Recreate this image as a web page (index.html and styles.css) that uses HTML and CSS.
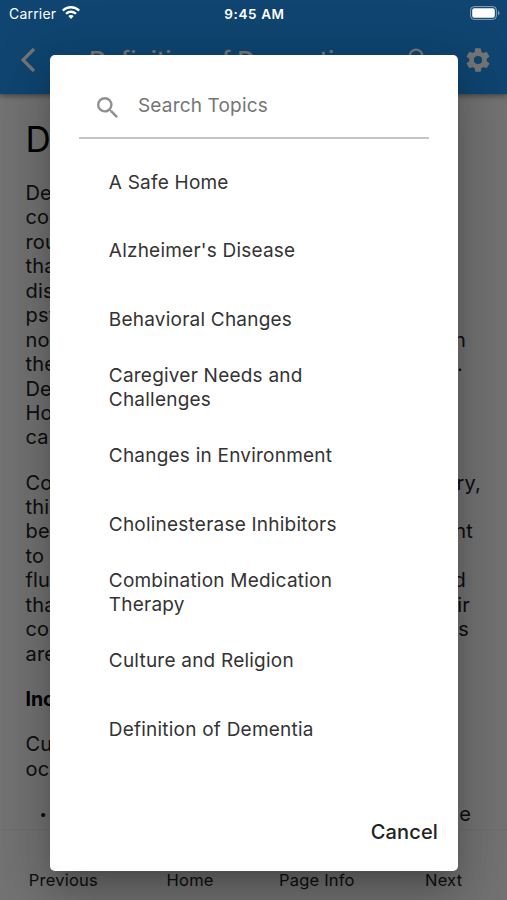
FILE: index.html
```html
<!DOCTYPE html>
<html lang="en">
<head>
<meta charset="utf-8">
<meta name="viewport" content="width=device-width">
<title>Definition of Dementia</title>
<link rel="stylesheet" href="styles.css">
</head>
<body>
<div class="phone">
  <div class="page">
    <header class="appbar">
      <svg class="back" viewBox="0 0 16 26"><path d="M14 2 3 13l11 11"/></svg>
      <div class="title">Definition of Dementia</div>
      <svg class="find" viewBox="0 0 24 24"><path d="M15.5 14h-.79l-.28-.27A6.47 6.47 0 0 0 16 9.500 6.500 6.500 0 1 0 9.500 16c1.610 0 3.090-.59 4.230-1.570l.27.28v.79l5 4.990L20.490 19zm-6 0a4.500 4.500 0 1 1 0-9 4.500 4.500 0 0 1 0 9z"/></svg>
      <svg class="gear" viewBox="0 0 24 24"><path d="M19.430 12.980c.04-.32.07-.64.07-.98s-.03-.66-.07-.98l2.110-1.650c.19-.15.24-.42.12-.64l-2-3.460c-.12-.22-.39-.3-.61-.22l-2.490 1c-.52-.4-1.080-.73-1.690-.98l-.38-2.650A.49.49 0 0 0 14 2h-4c-.25 0-.46.18-.49.42l-.38 2.650c-.61.25-1.170.59-1.690.98l-2.490-1c-.23-.09-.49 0-.61.22l-2 3.460c-.13.22-.07.49.12.64l2.110 1.650c-.04.32-.07.65-.07.98s.03.66.07.98l-2.110 1.650c-.19.15-.24.42-.12.64l2 3.460c.12.22.39.3.61.22l2.490-1c.52.4 1.080.73 1.690.98l.38 2.650c.03.24.24.42.49.42h4c.25 0 .46-.18.49-.42l.38-2.650c.61-.25 1.170-.59 1.690-.98l2.490 1c.23.09.49 0 .61-.22l2-3.460c.12-.22.07-.49-.12-.64zM12 15.500a3.500 3.500 0 1 1 0-7 3.500 3.500 0 0 1 0 7z"/></svg>
    </header>
    <main class="article">
      <h1>D</h1>
      <div class="para">
        <div class="line">De</div>
        <div class="line">co</div>
        <div class="line">rou</div>
        <div class="line">tha</div>
        <div class="line">dis</div>
        <div class="line">psy</div>
        <div class="line"><span>no</span><span class="end-n">n</span></div>
        <div class="line"><span>the</span><span class="end-dot">.</span></div>
        <div class="line">De</div>
        <div class="line">Ho</div>
        <div class="line">ca</div>
      </div>
      <div class="para">
        <div class="line"><span>Co</span><span class="end-ry">ry,</span></div>
        <div class="line">thi</div>
        <div class="line"><span>be</span><span class="end-nt">nt</span></div>
        <div class="line">to</div>
        <div class="line"><span>flu</span><span class="end-n">d</span></div>
        <div class="line"><span>tha</span><span class="end-ir">ir</span></div>
        <div class="line"><span>co</span><span class="end-s">s</span></div>
        <div class="line">are</div>
      </div>
      <h2>Inc</h2>
      <div class="para">
        <div class="line">Cu</div>
        <div class="line">oc</div>
      </div>
      <div class="line bullet"><span class="dot">•</span><span class="end-e">e</span></div>
    </main>
    <nav class="tabs"><span>Previous</span><span>Home</span><span>Page Info</span><span>Next</span></nav>
  </div>
  <div class="scrim"></div>
  <div class="status">
    <span class="carrier">Carrier
      <svg class="wifi" viewBox="0 0 18 14"><path d="M9 0c3.500 0 6.600 1.400 9 3.700l-1.600 1.700A10.700 10.700 0 0 0 9 2.400c-2.900 0-5.500 1.100-7.400 3L0 3.700A13 13 0 0 1 9 0zm0 4.500c2.200 0 4.300.9 5.800 2.400l-1.600 1.700A6.100 6.100 0 0 0 9 6.900c-1.600 0-3.100.6-4.200 1.700L3.200 6.900A8.300 8.300 0 0 1 9 4.500zM9 9c1 0 2 .4 2.700 1.100L9 13l-2.700-2.900A3.900 3.900 0 0 1 9 9z"/></svg>
    </span>
    <span class="clock">9:45 AM</span>
    <svg class="battery" viewBox="0 0 30 14"><rect x=".6" y=".6" width="25.800" height="12.800" rx="3.500" fill="none" stroke="#fff" stroke-opacity=".5"/><rect x="2.200" y="2.200" width="22.600" height="9.600" rx="2" fill="#fff"/><path d="M28 4.500q3 2.500 0 5z" fill="#fff" fill-opacity=".5"/></svg>
  </div>
  <section class="dialog">
    <div class="search">
      <svg viewBox="3 3 17.500 17.500"><path d="M15.500 14h-.79l-.28-.27A6.470 6.470 0 0 0 16 9.500 6.500 6.500 0 1 0 9.500 16c1.610 0 3.090-.59 4.230-1.570l.27.28v.79l5 4.990L20.490 19zm-6 0a4.500 4.500 0 1 1 0-9 4.500 4.500 0 0 1 0 9z"/></svg>
      <span>Search Topics</span>
    </div>
    <ul class="topics">
      <li>A Safe Home</li>
      <li>Alzheimer's Disease</li>
      <li>Behavioral Changes</li>
      <li>Caregiver Needs and<br>Challenges</li>
      <li>Changes in Environment</li>
      <li>Cholinesterase Inhibitors</li>
      <li>Combination Medication<br>Therapy</li>
      <li>Culture and Religion</li>
      <li>Definition of Dementia</li>
    </ul>
    <div class="actions"><span>Cancel</span></div>
  </section>
</div>
</body>
</html>
```
FILE: styles.css
```css
* { box-sizing: border-box; }
body { margin: 0; font-family: Inter, "Liberation Sans", sans-serif; }
.phone { position: relative; width: 507px; height: 900px; overflow: hidden; }
.page { height: 900px; display: flex; flex-direction: column; background: #fafafa; }
.appbar {
  height: 94px; flex: none; padding: 26px 15px 0 20px;
  display: flex; align-items: center;
  background: #2196f3; color: #fff; z-index: 1;
  box-shadow: 0 2px 5px rgba(0, 0, 0, .4);
}
.back { width: 16px; height: 26px; fill: none; stroke: #fff; stroke-width: 3.200; }
.title { margin-left: 53px; width: 306px; font-size: 24.500px; font-weight: 500; line-height: 30px; letter-spacing: -.1px; white-space: nowrap; }
.find { width: 28px; height: 28px; margin-left: 10px; margin-top: -2px; fill: #fff; }
.gear { width: 28px; height: 28px; margin-left: auto; fill: #fff; }
.article { height: 735px; flex: none; padding: 25px 26px 0 25.500px; color: #212121; }
h1 { margin: 0 0 21px; font-size: 35px; font-weight: 400; line-height: 41px; color: #000; }
.para { margin-bottom: 20.800px; }
.line { display: flex; justify-content: space-between; height: 24.450px; line-height: 24.450px; font-size: 20px; letter-spacing: .15px; }
h2 { margin: 0 0 20.800px; font-size: 19.500px; line-height: 24.450px; font-weight: 700; color: #000; }
.bullet { padding-left: 14px; }
.dot { font-size: 13px; }
.end-n { margin-right: 15px; }
.end-dot { margin-right: 18px; }
.end-ry { margin-right: 0; }
.end-nt { margin-right: 8px; }
.end-ir { margin-right: 11px; }
.end-s { margin-right: 12px; }
.end-e { margin-right: 10px; }
.tabs {
  flex: 1; display: grid; grid-template-columns: repeat(4, 1fr);
  padding-top: 40px; border-top: 1px solid #f0f0f0;
  text-align: center; font-size: 16.500px; line-height: 20px; letter-spacing: .2px; color: #212121;
}
.scrim { position: absolute; inset: 0; background: rgba(0, 0, 0, .54); z-index: 2; }
.status {
  position: absolute; inset: 0 0 auto; z-index: 4; height: 27px; padding: 0 7px 0 9px;
  display: grid; grid-template-columns: 1fr auto 1fr; align-items: center; color: #fff; font-size: 14px;
}
.carrier { display: flex; align-items: center; gap: 6px; letter-spacing: .2px; }
.wifi { width: 18px; height: 14px; margin-top: -1px; fill: #fff; }
.clock { font-size: 13.500px; font-weight: 600; letter-spacing: .6px; }
.battery { width: 30px; height: 14px; margin-top: -1px; justify-self: end; }
.dialog {
  position: absolute; z-index: 3; left: 50px; top: 55px; width: 408px; height: 815.500px;
  padding: 23px 29px 0; background: #fff; border-radius: 5px;
  box-shadow: 0 14px 19px -9px rgba(0, 0, 0, .2), 0 30px 48px 4px rgba(0, 0, 0, .14), 0 11px 58px 10px rgba(0, 0, 0, .12);
}
.search {
  height: 60.500px; display: flex; align-items: center; gap: 20px; padding: 0 0 4px 18px;
  border-bottom: 2px solid #c4c4c4; color: #757575; font-size: 19px; letter-spacing: .17px;
}
.search svg { width: 21px; height: 21px; margin-top: 5px; fill: #909090; }
.topics { list-style: none; margin: 9.700px 0 0; padding: 0 0 0 29.800px; }
.topics li { height: 68.400px; display: flex; align-items: center; font-size: 19px; line-height: 23.300px; letter-spacing: .22px; color: #333; }
.actions { display: flex; justify-content: flex-end; margin: 56px -9px 0 0; font-size: 20px; line-height: 24px; letter-spacing: .15px; font-weight: 500; color: #222; }
```
